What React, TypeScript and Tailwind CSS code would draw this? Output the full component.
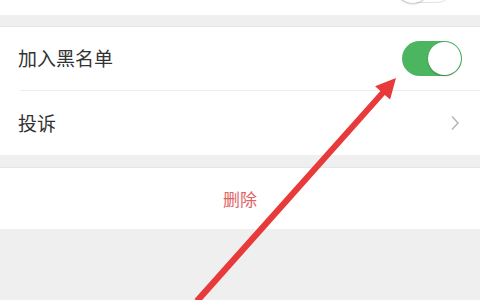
import React from 'react';

const font = { fontFamily: '"Noto Sans CJK SC", "Noto Sans", sans-serif' };

function Toggle({ on }: { on: boolean }) {
  return (
    <div
      className={`relative h-[35px] w-[60px] shrink-0 rounded-full ${
        on ? 'bg-[#4cb560]' : 'bg-white border border-[#e2e2e2]'
      }`}
    >
      <div
        className={`absolute top-[1px] h-[33px] w-[33px] rounded-full bg-white shadow-[0_1px_2px_rgba(0,0,0,0.25)] ${
          on ? 'right-[1px]' : 'left-[1px]'
        }`}
      />
    </div>
  );
}

export default function App() {
  return (
    <div className="relative h-[300px] w-[480px] overflow-hidden bg-[#efefef]" style={font}>
      {/* tail of previous group */}
      <div className="flex h-[15px] justify-end overflow-hidden bg-white pr-[26px]">
        <div className="mt-[-32px]">
          <Toggle on={false} />
        </div>
      </div>

      <div className="mt-[11px] border-t border-[#e4e4e4] bg-white">
        <div className="flex h-[63px] items-center justify-between pl-[18px] pr-[18px]">
          <span className="text-[19px] text-[#333]">加入黑名单</span>
          <Toggle on />
        </div>
        <div className="ml-[20px] h-px bg-[#ececec]" />
        <div className="flex h-[64px] items-center justify-between pl-[18px] pr-[20px]">
          <span className="text-[19px] text-[#333]">投诉</span>
          <svg width="10" height="16" viewBox="0 0 10 16" fill="none">
            <path d="M2 1.5 L8 8 L2 14.5" stroke="#b8b8b8" strokeWidth="1.6" />
          </svg>
        </div>
      </div>

      <div className="mt-[12px] flex h-[62px] items-center justify-center border-t border-[#e6e6e6] bg-white">
        <span className="text-[17px] text-[#e06464]">删除</span>
      </div>

      {/* red annotation arrow */}
      <svg className="pointer-events-none absolute left-0 top-0" width="480" height="300" viewBox="0 0 480 300">
        <polygon
          points="396,78 390.1,99.6 384.8,94.9 199.5,303 194.5,299 380.4,90.9 375.1,86.2"
          fill="#e83a3a"
        />
      </svg>
    </div>
  );
}
